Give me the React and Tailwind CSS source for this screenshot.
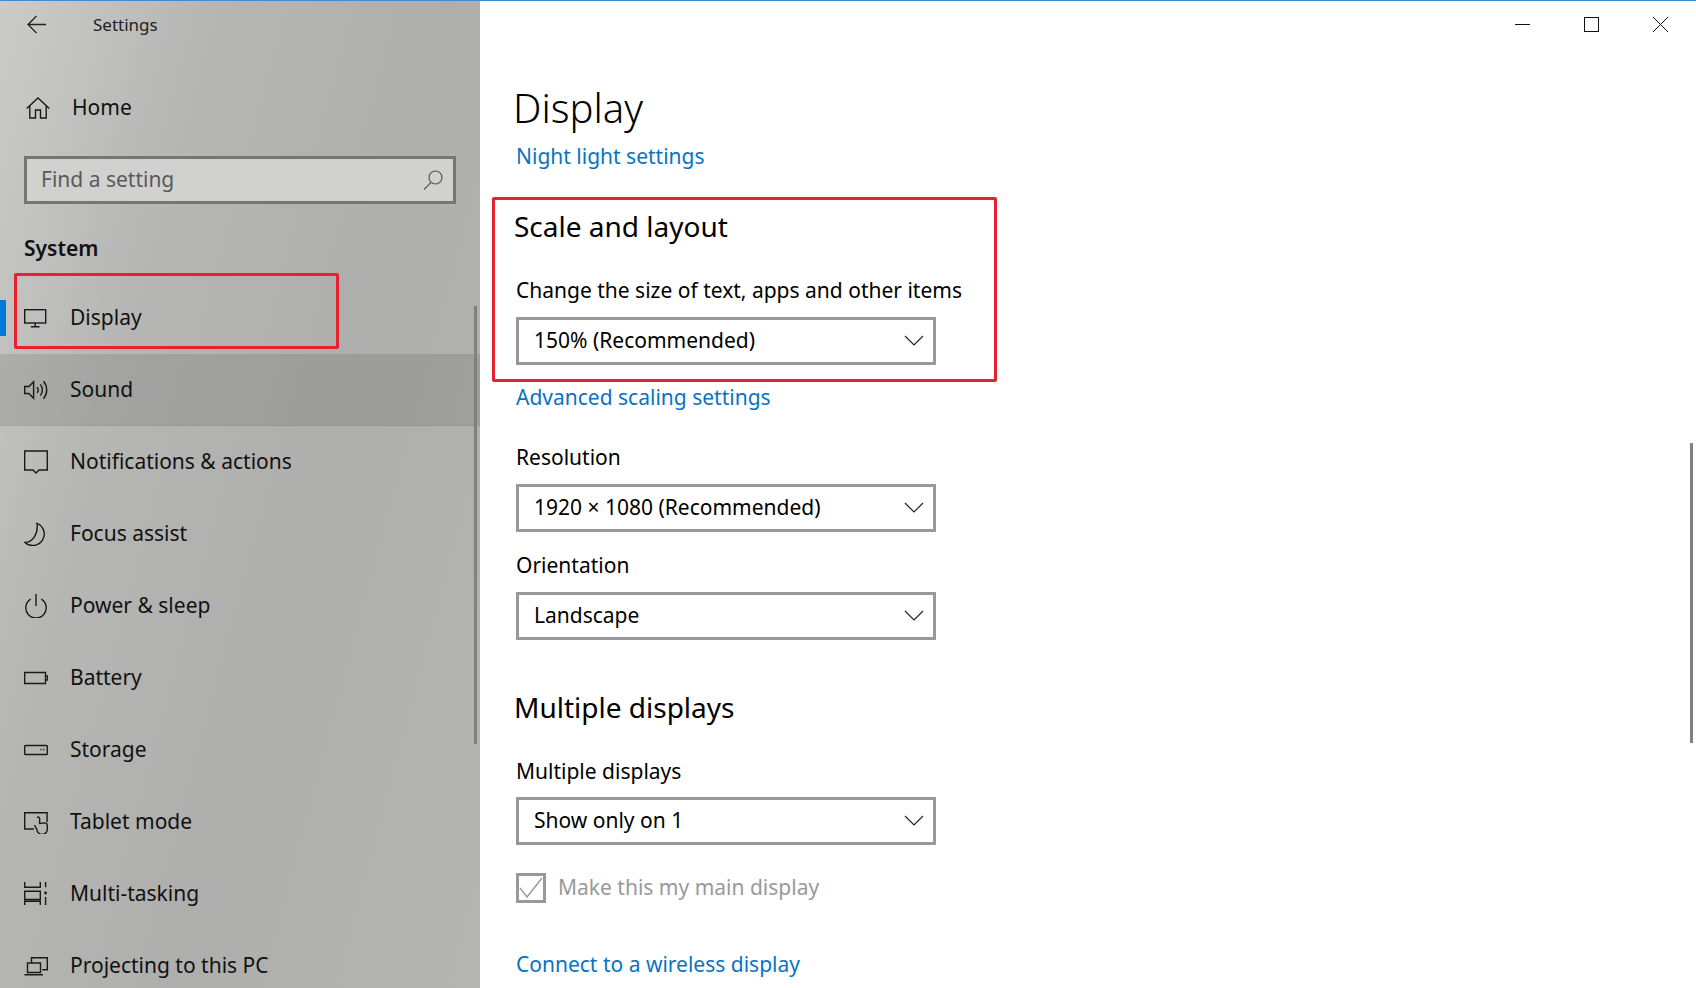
const font = { fontFamily: '"Noto Sans", "Open Sans", sans-serif' };

function Icon({ children, className = "" }) {
  return (
    <svg
      width="24"
      height="24"
      viewBox="0 0 24 24"
      fill="none"
      stroke="#1a1a1a"
      strokeWidth="1.4"
      className={`shrink-0 ${className}`}
    >
      {children}
    </svg>
  );
}

const navItems = [
  {
    label: "Display",
    active: true,
    icon: (
      <>
        <rect x="0.7" y="3.7" width="21" height="13.3" />
        <path d="M11.2 17v3.4M6.8 20.7h8.8" />
      </>
    ),
  },
  {
    label: "Sound",
    hover: true,
    icon: (
      <>
        <path d="M0.7 8.5h4.2L9.6 3.8v16.4L4.9 15.5H0.7z" />
        <path d="M13 9.2a4.2 4.2 0 0 1 0 5.6M16.3 6.4a8.6 8.6 0 0 1 0 11.2M19.5 3.3a13.4 13.4 0 0 1 0 17.4" />
      </>
    ),
  },
  {
    label: "Notifications & actions",
    icon: <path d="M0.7 1h22.6v19H15l-3 3-3-3H0.7z" />,
  },
  {
    label: "Focus assist",
    icon: <path d="M13 1.3A11.5 11.5 0 1 1 0.9 20.4C8 20.6 14.6 12.5 13 1.3z" />,
  },
  {
    label: "Power & sleep",
    icon: (
      <>
        <path d="M6.6 5.2a10.2 10.2 0 1 0 10.8 0" />
        <path d="M12 0v12" />
      </>
    ),
  },
  {
    label: "Battery",
    icon: <path d="M0.7 6.5h20.8v11H0.7zM21.5 10h2v4h-2" />,
  },
  {
    label: "Storage",
    icon: (
      <>
        <rect x="0.7" y="7.5" width="22.6" height="9" rx="0.8" />
        <path d="M16.5 11.5h1.2M19.2 11.5h1.2" />
      </>
    ),
  },
  {
    label: "Tablet mode",
    icon: (
      <>
        <path d="M10 19H0.7V2.7h22.4V12" />
        <path d="M13 7.5c1-1 2.6-.5 2.6 1v5l5-.6c1.6 0 2.7 1 2.7 2.6v3.5a5.2 5.2 0 0 1-10.4.5L10.5 15" />
      </>
    ),
  },
  {
    label: "Multi-tasking",
    icon: (
      <>
        <path d="M0.7 0v5.2h15.6V0M0.7 9.3h15.6v8.2H0.7zM0.7 23v-3.8h15.6V23M21.6 0v5.2M21.6 15v8" />
        <circle cx="21.6" cy="11" r="1.4" fill="#1a1a1a" stroke="none" />
      </>
    ),
  },
  {
    label: "Projecting to this PC",
    icon: (
      <>
        <path d="M7.5 8.5V3.7h15.8v12h-5" />
        <path d="M3.5 9h13v9.5h-13zM0.5 20.7h18.5" />
      </>
    ),
  },
];

function NavItem({ item }) {
  return (
    <div
      className={`relative flex h-[72px] items-center pl-6 text-[21px] text-[#111] ${
        item.hover ? "bg-black/10 border-b border-black/5" : ""
      }`}
    >
      {item.active && (
        <>
          <div className="absolute left-0 top-[18px] h-9 w-1.5 bg-[#0078d7]" />
          <div className="absolute left-[14px] top-[-9px] h-[76px] w-[325px] rounded-[2px] border-[3px] border-[#e8202f]" />
        </>
      )}
      <Icon>{item.icon}</Icon>
      <span className="ml-[22px]">{item.label}</span>
    </div>
  );
}

function Sidebar() {
  return (
    <aside className="relative h-full w-[480px] shrink-0 overflow-hidden bg-[linear-gradient(105deg,#cbcbc9_0%,#b6b6b4_28%,#aeaeac_60%,#b4b4b1_100%)]">
      <div className="flex h-[47px] items-center pl-[27px]">
        <svg width="19" height="19" viewBox="0 0 19 19" fill="none" stroke="#222" strokeWidth="1.3">
          <path d="M19 9.5H1M9.5 1L1 9.5 9.5 18" />
        </svg>
        <span className="ml-[47px] text-[17px] text-[#222]">Settings</span>
      </div>
      <div className="mt-6 flex h-[72px] items-center pl-[26px] text-[21px] text-[#111]">
        <Icon>
          <path d="M0.7 12.5L12 2l11.3 10.5M3.8 10v12h5.7v-8h5v8h5.7V10" />
        </Icon>
        <span className="ml-[22px]">Home</span>
      </div>
      <div className="mx-6 mt-3 flex h-12 items-center justify-between border-[3px] border-[#757575] bg-[#d1d1cf] pl-[14px] pr-[10px] text-[21px] text-[#5a5a5a]">
        <span>Find a setting</span>
        <svg width="20" height="20" viewBox="0 0 20 20" fill="none" stroke="#555" strokeWidth="1.2">
          <circle cx="12.5" cy="7.5" r="6.5" />
          <path d="M8 12.3L1 19.5" />
        </svg>
      </div>
      <div className="ml-6 mt-[29px] flex h-8 items-center text-[21px] font-semibold text-[#111]">System</div>
      <nav className="mt-[17px]">
        {navItems.map((item) => (
          <NavItem key={item.label} item={item} />
        ))}
      </nav>
      <div className="absolute right-[3px] top-[305px] h-[438px] w-[3px] bg-[#808080]" />
    </aside>
  );
}

function Dropdown({ value, className = "" }) {
  return (
    <div className={`flex h-12 w-[420px] items-center justify-between border-[3px] border-[#999] bg-white pl-[15px] pr-[9px] text-[21px] text-black ${className}`}>
      <span>{value}</span>
      <svg width="20" height="12" viewBox="0 0 20 12" fill="none" stroke="#222" strokeWidth="1.2">
        <path d="M1 1l9 9 9-9" />
      </svg>
    </div>
  );
}

function Label({ children, className = "" }) {
  return <div className={`flex h-8 items-center whitespace-nowrap text-[21px] text-black ${className}`}>{children}</div>;
}

function LinkText({ children, className = "" }) {
  return <div className={`flex h-8 items-center text-[21px] text-[#0a72c4] ${className}`}>{children}</div>;
}

function WindowControls() {
  return (
    <div className="flex h-[47px] items-center justify-end gap-[54px] pr-7">
      <div className="h-px w-[15px] bg-[#111]" />
      <div className="h-[15px] w-[15px] border border-[#111]" />
      <svg width="15" height="15" viewBox="0 0 15 15" stroke="#111" strokeWidth="1">
        <path d="M0 0l15 15M15 0L0 15" />
      </svg>
    </div>
  );
}

function Main() {
  return (
    <main className="relative h-full flex-1 overflow-hidden bg-white">
      <WindowControls />
      <div className="pl-9">
        <div className="-ml-[3px] mt-[30px] flex h-[60px] items-center text-[40px] font-light text-black">Display</div>
        <LinkText className="mt-[3px]">Night light settings</LinkText>
        <section className="-ml-6 mt-6 h-[185px] w-[505px] rounded-[2px] border-[3px] border-[#e8202f] pl-[21px]">
          <div className="-ml-0.5 mt-[6px] flex h-10 items-center text-[28px] text-black">Scale and layout</div>
          <Label className="mt-[29px]">Change the size of text, apps and other items</Label>
          <Dropdown value="150% (Recommended)" className="mt-[10px]" />
        </section>
        <LinkText>Advanced scaling settings</LinkText>
        <Label className="mt-7">Resolution</Label>
        <Dropdown value="1920 × 1080 (Recommended)" className="mt-[10px]" />
        <Label className="mt-[18px]">Orientation</Label>
        <Dropdown value="Landscape" className="mt-[10px]" />
        <div className="-ml-0.5 mt-[47px] flex h-10 items-center text-[28px] text-black">Multiple displays</div>
        <Label className="mt-[29px]">Multiple displays</Label>
        <Dropdown value="Show only on 1" className="mt-[9px]" />
        <div className="mt-[27px] flex items-center gap-3 text-[21px] text-[#999]">
          <div className="h-[30px] w-[30px] border-[3px] border-[#999]">
            <svg width="24" height="24" viewBox="0 0 24 24" fill="none" stroke="#999" strokeWidth="1.4">
              <path d="M1 12l7 9L23 2" />
            </svg>
          </div>
          <span>Make this my main display</span>
        </div>
        <LinkText className="mt-[45px]">Connect to a wireless display</LinkText>
      </div>
      <div className="absolute right-[3px] top-[442px] h-[300px] w-[3px] bg-[#808080]" />
    </main>
  );
}

export default function App() {
  return (
    <div style={font} className="flex h-[988px] w-[1696px] flex-col overflow-hidden">
      <div className="h-px shrink-0 bg-[#3d8ec9]" />
      <div className="flex min-h-0 flex-1">
        <Sidebar />
        <Main />
      </div>
    </div>
  );
}
